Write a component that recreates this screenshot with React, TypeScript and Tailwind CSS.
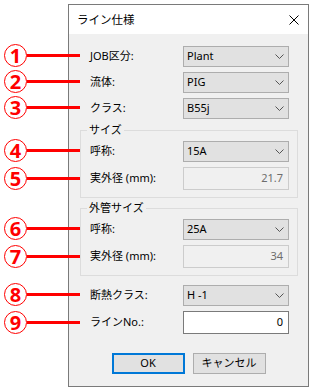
import React from 'react';

const font = { fontFamily: '"Noto Sans", "Noto Sans CJK JP", sans-serif' };

const Chevron = () => (
    <svg width="9" height="5" viewBox="0 0 9 5" className="shrink-0">
        <polyline points="0.5,0.5 4.5,4.5 8.5,0.5" fill="none" stroke="#555" strokeWidth="1" />
    </svg>
);

const Combo = ({ value }: { value: string }) => (
    <div className="w-[106px] h-[21px] border border-[#adadad] bg-[#e1e1e1] flex items-center justify-between pl-[3px] pr-[4px] text-[11px] text-black">
        <span>{value}</span>
        <Chevron />
    </div>
);

const Field = ({ value, readOnly }: { value: string; readOnly?: boolean }) => (
    <div
        className={`w-[106px] h-[23px] border flex items-center justify-end pr-[5px] text-[11px] ${readOnly ? 'border-[#cccccc] bg-[#f0f0f0] text-[#6d6d6d]' : 'border-[#7a7a7a] bg-white text-black'}`}
    >
        {value}
    </div>
);

const Row = ({ label, children, className = '' }: { label: string; children: React.ReactNode; className?: string }) => (
    <div className={`flex items-center ${className}`}>
        <span className="w-[93px] text-[11px] text-black whitespace-nowrap">{label}</span>
        {children}
    </div>
);

const Group = ({ title, children, className = '' }: { title: string; children: React.ReactNode; className?: string }) => (
    <div className={`relative border border-[#dcdcdc] pl-[9px] pt-[10px] pb-[7px] ${className}`}>
        <span className="absolute top-[-9px] left-[6px] px-[2px] h-[16px] leading-[16px] bg-[#f0f0f0] text-[11px] text-black">{title}</span>
        {children}
    </div>
);

// red callouts drawn over the dialog
const marks = [
    { n: '1', y: 56 },
    { n: '2', y: 82 },
    { n: '3', y: 108 },
    { n: '4', y: 151 },
    { n: '5', y: 179 },
    { n: '6', y: 229 },
    { n: '7', y: 257 },
    { n: '8', y: 295 },
    { n: '9', y: 323 },
];

export default function App() {
    return (
        <div className="relative w-[313px] h-[391px] bg-white overflow-hidden" style={font}>
            <div className="ml-[68px] mt-[4px] w-[241px] h-[383px] border border-[#7a7a7a] flex flex-col">
                {/* Title bar */}
                <div className="h-[29px] bg-white flex items-center justify-between pl-[8px] pr-[9px] shrink-0">
                    <span className="text-[11.5px] text-black">ライン仕様</span>
                    <svg width="10" height="10" viewBox="0 0 10 10">
                        <path d="M0.5 0.5 L9.5 9.5 M9.5 0.5 L0.5 9.5" stroke="#000" strokeWidth="1" />
                    </svg>
                </div>

                {/* Body */}
                <div className="flex-1 bg-[#f0f0f0] pt-[12px] pl-[11px] pr-[10px] flex flex-col">
                    <div className="pl-[10px] flex flex-col gap-[5px]">
                        <Row label="JOB区分:"><Combo value="Plant" /></Row>
                        <Row label="流体:"><Combo value="PIG" /></Row>
                        <Row label="クラス:"><Combo value="B55j" /></Row>
                    </div>

                    <Group title="サイズ" className="mt-[11px]">
                        <div className="flex flex-col gap-[5px]">
                            <Row label="呼称:"><Combo value="15A" /></Row>
                            <Row label="実外径 (mm):"><Field value="21.7" readOnly /></Row>
                        </div>
                    </Group>

                    <Group title="外管サイズ" className="mt-[10px]">
                        <div className="flex flex-col gap-[5px]">
                            <Row label="呼称:"><Combo value="25A" /></Row>
                            <Row label="実外径 (mm):"><Field value="34" readOnly /></Row>
                        </div>
                    </Group>

                    <div className="pl-[10px] mt-[9px] flex flex-col gap-[5px]">
                        <Row label="断熱クラス:"><Combo value="H -1" /></Row>
                        <Row label="ラインNo.:"><Field value="0" /></Row>
                    </div>

                    <div className="mt-[19px] flex justify-center gap-[8px] pr-[1px]">
                        <button className="w-[73px] h-[21px] border-2 border-[#0078d7] bg-[#e1e1e1] text-[11px] text-black">OK</button>
                        <button className="w-[73px] h-[21px] border border-[#adadad] bg-[#e1e1e1] text-[11px] text-black">キャンセル</button>
                    </div>
                </div>
            </div>

            {marks.map((m) => (
                <div key={m.n} className="absolute left-[4px] flex items-center" style={{ top: m.y - 12 }}>
                    <div className="w-[23px] h-[23px] rounded-full border-[1.5px] border-[#ff0000] flex items-center justify-center text-[#ff0000] font-bold text-[20px] leading-none">
                        {m.n}
                    </div>
                    <div className="w-[53px] h-[3px] bg-[#ff0000]" />
                </div>
            ))}
        </div>
    );
}
